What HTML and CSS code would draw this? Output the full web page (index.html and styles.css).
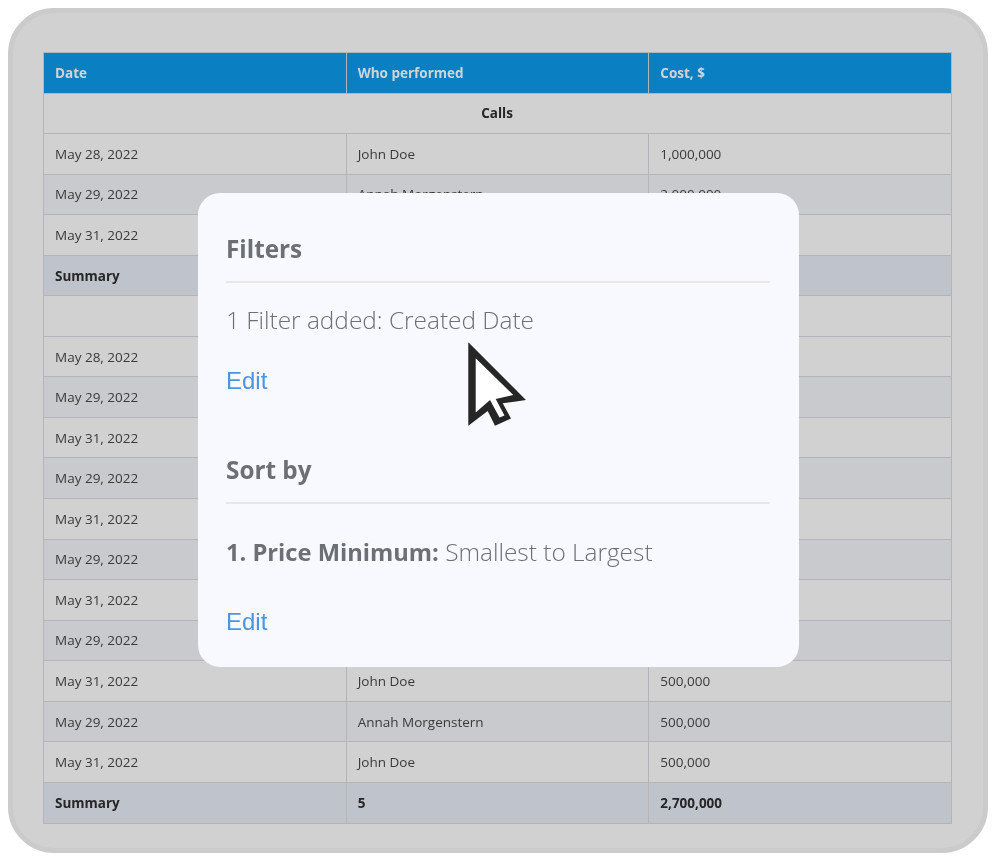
FILE: index.html
```html
<!DOCTYPE html>
<html lang="en">
<head>
<meta charset="utf-8">
<title>Filters</title>
<link rel="stylesheet" href="styles.css">
</head>
<body>
<main class="frame">
  <table class="report">
    <thead>
      <tr><th>Date</th><th>Who performed</th><th>Cost, $</th></tr>
    </thead>
    <tbody>
      <tr class="section"><td colspan="3">Calls</td></tr>
      <tr><td>May 28, 2022</td><td>John Doe</td><td>1,000,000</td></tr>
      <tr class="alt"><td>May 29, 2022</td><td>Annah Morgenstern</td><td>2,000,000</td></tr>
      <tr><td>May 31, 2022</td><td></td><td></td></tr>
      <tr class="summary"><td>Summary</td><td></td><td></td></tr>
      <tr class="section"><td colspan="3"></td></tr>
      <tr><td>May 28, 2022</td><td></td><td></td></tr>
      <tr class="alt"><td>May 29, 2022</td><td></td><td></td></tr>
      <tr><td>May 31, 2022</td><td></td><td></td></tr>
      <tr class="alt"><td>May 29, 2022</td><td></td><td></td></tr>
      <tr><td>May 31, 2022</td><td></td><td></td></tr>
      <tr class="alt"><td>May 29, 2022</td><td></td><td></td></tr>
      <tr><td>May 31, 2022</td><td></td><td></td></tr>
      <tr class="alt"><td>May 29, 2022</td><td></td><td></td></tr>
      <tr><td>May 31, 2022</td><td>John Doe</td><td>500,000</td></tr>
      <tr class="alt"><td>May 29, 2022</td><td>Annah Morgenstern</td><td>500,000</td></tr>
      <tr><td>May 31, 2022</td><td>John Doe</td><td>500,000</td></tr>
      <tr class="summary"><td>Summary</td><td>5</td><td>2,700,000</td></tr>
    </tbody>
  </table>

  <section class="modal">
    <h2 class="modal-title">Filters</h2>
    <p class="modal-line">1 Filter added: Created Date</p>
    <a class="modal-edit" href="#">Edit</a>
    <h2 class="modal-title modal-title-sort">Sort by</h2>
    <p class="modal-line modal-line-sort"><strong>1. Price Minimum:</strong> Smallest to Largest</p>
    <a class="modal-edit modal-edit-sort" href="#">Edit</a>
  </section>

  <svg class="pointer" viewBox="0 0 90 100" width="90" height="100" aria-hidden="true">
    <polygon fill="#262626" points="18.3,7.3 76,65 52.7,68.3 61,83.5 45,90.7 37.7,76 18.3,90.7"/>
    <polygon fill="#ffffff" points="25.7,23.3 63.3,60 45.7,64 54.5,80.5 49.5,82.5 40,65 25.7,77.5"/>
  </svg>
</main>
</body>
</html>
```

FILE: styles.css
```css
* { box-sizing: border-box; }

html, body {
  margin: 0;
  background: #ffffff;
}

.frame {
  position: relative;
  width: 980px;
  height: 845px;
  margin: 8px;
  padding: 39px 30px 0;
  background: #d1d1d1;
  border: 5px solid #cbcbcb;
  border-radius: 46px;
  font-family: "Open Sans", sans-serif;
  will-change: transform;
}

.report {
  width: 909px;
  table-layout: fixed;
  border-collapse: collapse;
  font-size: 13.5px;
  color: #3a3a3a;
}

.report th,
.report td {
  height: 40.55px;
  padding: 0 10px 0 11px;
  border: 1px solid #b4b5b9;
  text-align: left;
  font-weight: 400;
}

.report th {
  background: #0a7fc2;
  color: #d1d4d6;
  font-weight: 700;
}

.alt td { background: #c9cacd; }

.report .section td {
  padding-right: 12px;
  text-align: center;
  font-weight: 700;
  color: #262626;
}

.summary td {
  background: #bfc3cb;
  color: #262626;
}

.report .summary td {
  font-weight: 700;
}

.report .summary:last-child td {
  height: 41.5px;
}

.modal {
  position: absolute;
  left: 185px;
  top: 180px;
  width: 601px;
  height: 474px;
  padding: 36px 29px 0 28px;
  background: #f8f9fe;
  border-radius: 22px;
  color: #6c7075;
}

.modal-title {
  margin: 0;
  height: 54px;
  border-bottom: 2px solid #e8e6e6;
  font-size: 24.3px;
  line-height: 40px;
  font-weight: 700;
}

.modal-title-sort {
  margin-top: 49px;
}

.modal-line {
  margin: 17px 0 0;
  font-size: 24.4px;
  line-height: 40px;
  font-weight: 300;
}

.modal-line-sort {
  margin-top: 28px;
}

.modal-line strong {
  font-size: 23.7px;
  font-weight: 700;
}

.modal-edit {
  display: block;
  margin-top: 21px;
  font-family: "Liberation Sans", Arial, sans-serif;
  font-size: 24px;
  line-height: 40px;
  color: #4f93e3;
  text-decoration: none;
}

.modal-edit-sort {
  margin-top: 30px;
}

.pointer {
  position: absolute;
  left: 437px;
  top: 322px;
}
```
